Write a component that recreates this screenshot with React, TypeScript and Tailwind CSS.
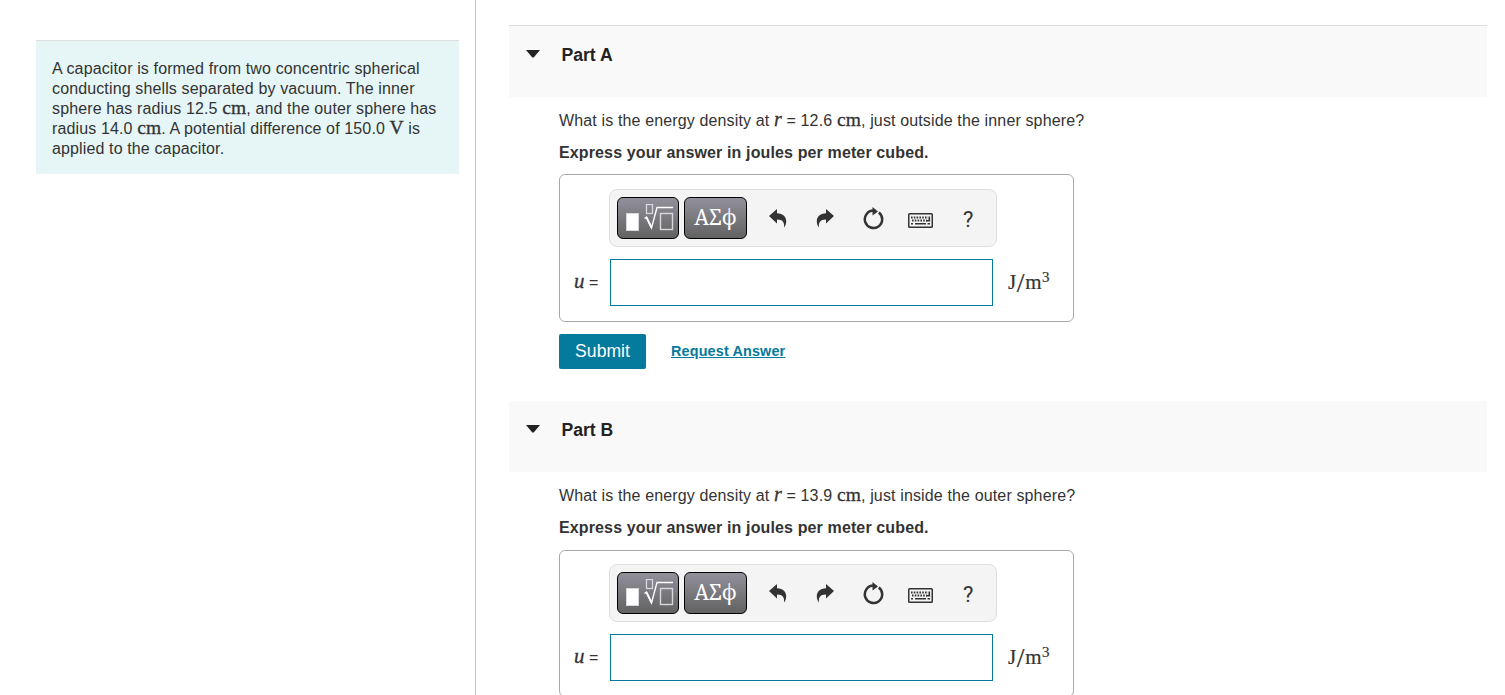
import React from 'react';

interface PartProps {
  label: string;
  radius: string;
  location: string;
  first?: boolean;
}

const Unit: React.FC<{ children: React.ReactNode }> = ({ children }) => (
  <span className="font-['Liberation_Serif',serif] text-[19.5px] leading-[0] [-webkit-text-stroke:0.3px_#333]">{children}</span>
);

const TemplatesIcon = () => (
  <svg className="ml-1 shrink-0" width="48" height="28" viewBox="0 0 48 28" fill="none">
    <rect x="0.5" y="9.5" width="12" height="17" fill="#fff" stroke="#d8d8dc" />
    <rect x="20.5" y="0.5" width="6" height="9" stroke="#d8d8dc" strokeWidth="1.3" />
    <path d="M18.500 14.500l2-1.500 5 11L31 3.500H47" stroke="#fff" strokeWidth="1.4" />
    <path d="M20.500 13.500l5 10" stroke="#fff" strokeWidth="1.8" />
    <rect x="34.500" y="9.500" width="12" height="16" stroke="#d8d8dc" strokeWidth="1.4" />
  </svg>
);

const UndoIcon = () => (
  <svg width="18" height="20" viewBox="0 0 18 20" fill="#333">
    <path d="M0 8L8 1v4.200c6 .2 9.500 3.800 9.200 8.300-.1 2.500-.8 4.600-2.200 6 .6-4.600-.8-8-7-8v4z" />
  </svg>
);

const RefreshIcon = () => (
  <svg width="21" height="23" viewBox="0 0 21 23">
    <path d="M15.800 5.400A8.700 8.700 0 1 1 10.500 3.600" fill="none" stroke="#333" strokeWidth="2.500" />
    <path d="M9.500 0l5.500 4.500-5.500 4z" fill="#333" />
  </svg>
);

const KeyboardIcon = () => (
  <svg width="25" height="15" viewBox="0 0 25 15" fill="none" stroke="#333">
    <rect x="0.750" y="0.750" width="23.500" height="13.500" rx="0.800" strokeWidth="1.500" />
    <path d="M3 4.500H20M4 7.500H19" strokeWidth="1.800" strokeDasharray="1.600 1.200" />
    <path d="M3 10.800H5M7 10.800H18M19.500 10.800H22M21.300 3.500V7.800H18" strokeWidth="1.600" />
  </svg>
);

const toolButton =
  'flex h-[42px] items-center justify-center rounded-[6px] border border-black bg-linear-to-b from-[#92919b] to-[#626262] text-white';

const Toolbar = () => (
  <div className="ml-[49px] flex h-[58px] w-[388px] items-center rounded-[8px] border border-[#dedede] bg-[#f4f4f4] pl-[7px] text-[#333]">
    <button className={`${toolButton} w-[62px]`}><TemplatesIcon /></button>
    <button className={`${toolButton} ml-[5px] w-[63px] pb-px font-['Noto_Serif','DejaVu_Serif',serif] text-[21px]`}>ΑΣϕ</button>
    <button className="ml-[22px]"><UndoIcon /></button>
    <button className="ml-[29px] -scale-x-100"><UndoIcon /></button>
    <button className="ml-[28.5px]"><RefreshIcon /></button>
    <button className="mt-1 ml-[24.5px]"><KeyboardIcon /></button>
    <button className="ml-[30px] pt-[3px] font-['Roboto',sans-serif] text-[22px]">?</button>
  </div>
);

const Part: React.FC<PartProps> = ({ label, radius, location, first }) => (
  <section className={first ? 'h-[376px]' : 'h-[294px]'}>
    <header className={`flex items-start bg-[#f9f9f9] pt-5 pl-[17px] ${first ? 'h-[72px] border-t border-[#dedede]' : 'h-[71px]'}`}>
      <svg className="mt-1" width="14" height="8" viewBox="0 0 14 8" fill="#222">
        <path d="M0 0H14L7.700 7.500H6.300z" />
      </svg>
      <h2 className="ml-[21.5px] text-[17.6px] leading-[18px] font-bold text-[#222]">{label}</h2>
    </header>
    <div className="pt-[14px] pl-[50px]">
      <p className="h-5 text-[16px] leading-5 tracking-[0.14px] whitespace-nowrap">
        What is the energy density at <i className="font-['Liberation_Serif',serif] text-[20px] leading-[0] [-webkit-text-stroke:0.3px_#333]">r</i> = {radius} <Unit>cm</Unit>, just {location} sphere?
      </p>
      <p className="mt-3 h-5 text-[16px] leading-5 font-bold tracking-[0.13px]">Express your answer in joules per meter cubed.</p>
      <div className={`w-[515px] rounded-[6px] border border-[#aaa] ${first ? 'mt-[11px] h-[148px] pt-[14px]' : 'mt-3 h-[147px] pt-[13px]'}`}>
        <Toolbar />
        <div className="mt-3 flex items-center">
          <span className="w-[50px] pl-[14px] text-[16px] leading-5 whitespace-nowrap">
            <i className="font-['Liberation_Serif',serif] text-[21px] leading-[0] [-webkit-text-stroke:0.3px_#333]">u</i> =
          </span>
          <input className="h-[47px] w-[383px] border border-[#047a9c] bg-white outline-none" />
          <span className="-mt-0.5 ml-[15px] font-['Liberation_Serif',serif] text-[21px] leading-6 tracking-[0.6px] whitespace-nowrap [-webkit-text-stroke:0.2px_#333]">
            J<span className="relative top-[3px] text-[28px] leading-[0]">/</span>m<span className="relative -top-[7px] text-[15px] leading-[0]">3</span>
          </span>
        </div>
      </div>
      {first && (
        <div className="mt-3 flex items-center">
          <button className="h-[35px] w-[87px] rounded-[2px] bg-[#047a9c] text-[17.6px] text-white">Submit</button>
          <a className="ml-[25px] text-[14.4px] font-bold tracking-[0.15px] text-[#047a9c] underline">Request Answer</a>
        </div>
      )}
    </div>
  </section>
);

export default function App() {
  return (
    <div className="flex h-[695px] w-[1505px] overflow-hidden bg-white font-['Liberation_Sans',Arial,sans-serif] text-[#333]">
      <aside className="w-[476px] border-r border-[#b9c5d3] pt-10 pl-9">
        <div className="h-[134px] w-[423px] border-t border-[#dedede] bg-[#e6f6f7] pt-[18px] pl-4 text-[16px] leading-5 tracking-[0.13px] whitespace-nowrap">
          <p className="h-5">A capacitor is formed from two concentric spherical</p>
          <p className="h-5">conducting shells separated by vacuum. The inner</p>
          <p className="h-5">sphere has radius 12.5 <Unit>cm</Unit>, and the outer sphere has</p>
          <p className="h-5">radius 14.0 <Unit>cm</Unit>. A potential difference of 150.0 <Unit>V</Unit> is</p>
          <p className="h-5">applied to the capacitor.</p>
        </div>
      </aside>
      <main className="ml-[33px] w-[978px] pt-[25px]">
        <Part label="Part A" radius="12.6" location="outside the inner" first />
        <Part label="Part B" radius="13.9" location="inside the outer" />
      </main>
    </div>
  );
}
